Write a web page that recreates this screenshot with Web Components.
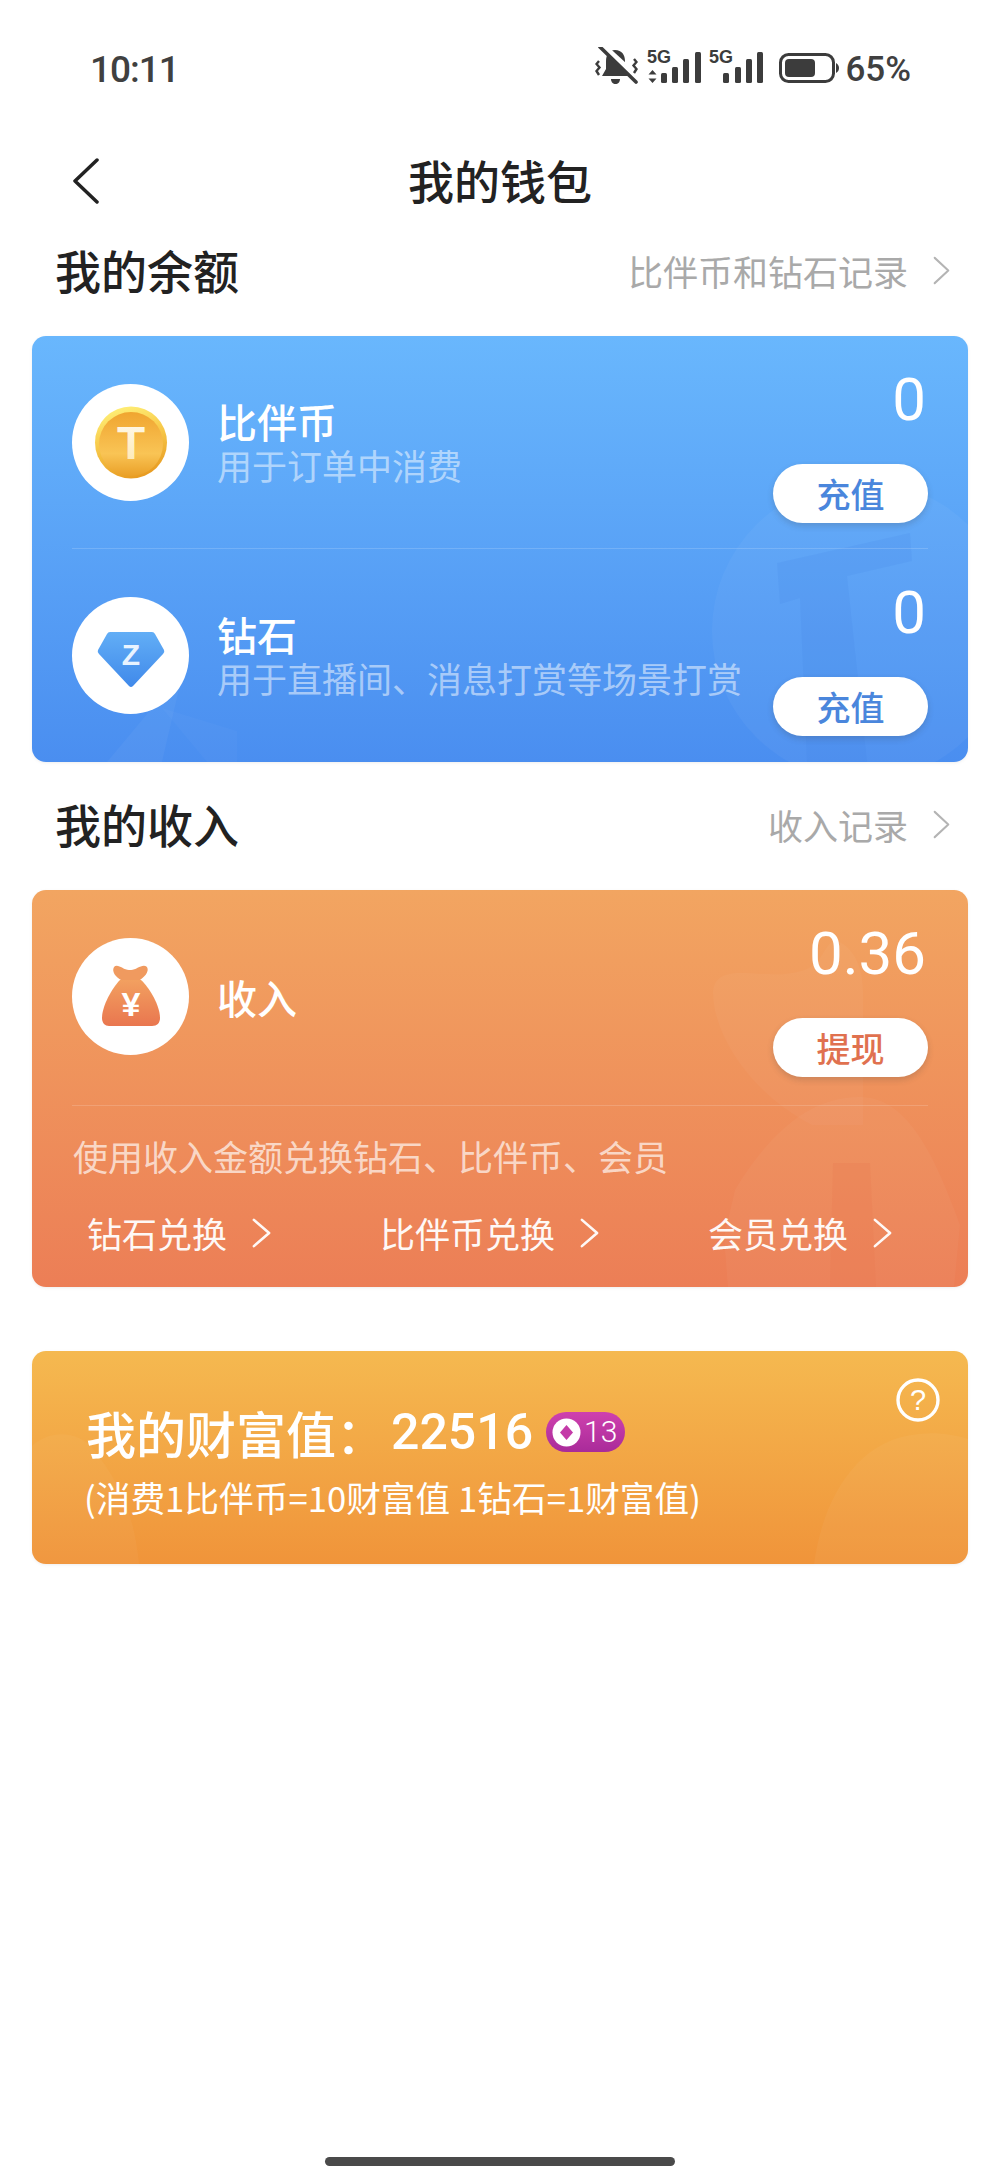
<!DOCTYPE html>
<html lang="zh-CN">
<head>
<meta charset="utf-8">
<title>我的钱包</title>
<style>
  html, body { margin: 0; background: #fff; }
  body { font-family: "Noto Sans CJK SC", "Noto Sans", sans-serif; color: #222; }
  wallet-page { width: 1000px; height: 2177px; }
  wallet-card + section-head { margin-top: 16px; }
</style>
</head>
<body>
<wallet-page>
  <status-bar></status-bar>
  <nav-bar title="我的钱包"></nav-bar>

  <section-head label="我的余额" link="比伴币和钻石记录"></section-head>
  <wallet-card tone="blue">
    <wallet-row value="0" action="充值" icon="coin" name="比伴币" desc="用于订单中消费"></wallet-row>
    <wallet-row value="0" action="充值" icon="diamond" name="钻石" desc="用于直播间、消息打赏等场景打赏" divided></wallet-row>
  </wallet-card>

  <section-head label="我的收入" link="收入记录"></section-head>
  <wallet-card tone="orange">
    <wallet-row value="0.36" action="提现" icon="bag" name="收入" center></wallet-row>
    <exchange-panel note="使用收入金额兑换钻石、比伴币、会员">
      <exchange-link>钻石兑换</exchange-link>
      <exchange-link>比伴币兑换</exchange-link>
      <exchange-link>会员兑换</exchange-link>
    </exchange-panel>
  </wallet-card>

  <wealth-card value="22516" level="13" note="(消费1比伴币=10财富值 1钻石=1财富值)"></wealth-card>
  <home-bar></home-bar>
</wallet-page>

<script>
const CHEVRON = (color, width) => /*html*/ `
  <svg viewBox="0 0 20 32" width="100%" height="100%" preserveAspectRatio="none" style="display:block" fill="none" stroke="${ color }" stroke-width="${ width }" stroke-linecap="round" stroke-linejoin="round">
    <path d="M2 2 L18 16 L2 30"/>
  </svg>`;

class WalletPage extends HTMLElement {
  constructor() {
    super();
    this.attachShadow({ mode: 'open' });
    this.shadowRoot.innerHTML = /*html*/ `
      <style>
        :host { display: flex; flex-direction: column; position: relative; overflow: hidden; }
      </style>
      <slot></slot>
    `;
  }
}

class StatusBar extends HTMLElement {
  constructor() {
    super();
    this.attachShadow({ mode: 'open' });
    this.shadowRoot.innerHTML = /*html*/ `
      <style>
        :host { display: flex; align-items: center; justify-content: space-between; height: 138px; padding: 0 89px 0 90px; box-sizing: border-box; color: #404040; font-family: Roboto, sans-serif; font-weight: 500; }
        .status__time { font-size: 37px; letter-spacing: -1px; }
        .status__icons { display: flex; align-items: center; }
        .status__pct { font-size: 35px; margin-left: 6px; }
        svg { display: block; margin-bottom: 6px; }
        text { font-family: "Liberation Sans", sans-serif; font-weight: 700; font-size: 18px; fill: #3c3c3c; }
      </style>
      <span class="status__time">10:11</span>
      <div class="status__icons">
        <svg width="43" height="38" viewBox="0 0 43 38" style="margin-right:9px">
          <path d="M20 3c-6 0-9 5-9 11v8l-4 7h27l-4-7v-8c0-6-3-11-10-11z" fill="#3c3c3c"/>
          <path d="M16 32h9c0 3-2 5-4.500 5S16 35 16 32z" fill="#3c3c3c"/>
          <path d="M8 -1 L44 32" stroke="#fff" stroke-width="6"/>
          <path d="M5 0 L41 35" stroke="#3c3c3c" stroke-width="3.600" stroke-linecap="round"/>
          <path d="M4 14 L1.500 17 L4.500 20.500 L1.500 24 L4 28 M39 12 L41.500 15 L38.500 18.500 L41.500 22 L39 26" fill="none" stroke="#3c3c3c" stroke-width="2.400"/>
        </svg>
        <svg width="54" height="36" viewBox="0 0 54 36" style="margin-right:8px">
          <text x="0" y="14.500">5G</text>
          <path d="M5.500 22l4 4.500h-8zM5.500 35l4-4.500h-8z" fill="#3c3c3c"/>
          <rect x="14" y="25" width="6" height="10" rx="1.500" fill="#3c3c3c"/>
          <rect x="25" y="19" width="6" height="16" rx="1.500" fill="#3c3c3c"/>
          <rect x="36" y="11" width="6" height="24" rx="1.500" fill="#3c3c3c"/>
          <rect x="48" y="4" width="6" height="31" rx="1.500" fill="#3c3c3c"/>
        </svg>
        <svg width="54" height="36" viewBox="0 0 54 36" style="margin-right:16px">
          <text x="0" y="14.500">5G</text>
          <rect x="14" y="25" width="6" height="10" rx="1.500" fill="#3c3c3c"/>
          <rect x="26" y="19" width="6" height="16" rx="1.500" fill="#3c3c3c"/>
          <rect x="37" y="11" width="6" height="24" rx="1.500" fill="#3c3c3c"/>
          <rect x="48" y="4" width="6" height="31" rx="1.500" fill="#3c3c3c"/>
        </svg>
        <svg width="60" height="30" viewBox="0 0 60 30" style="margin-bottom:2px">
          <rect x="1.500" y="1.500" width="53" height="27" rx="8" fill="none" stroke="#3c3c3c" stroke-width="3"/>
          <rect x="6" y="6" width="30" height="18" rx="4" fill="#3c3c3c"/>
          <path d="M57 10c2 1 3 3 3 5s-1 4-3 5z" fill="#3c3c3c"/>
        </svg>
        <span class="status__pct">65%</span>
      </div>
    `;
  }
}

class NavBar extends HTMLElement {
  constructor() {
    super();
    this.attachShadow({ mode: 'open' });
  }

  connectedCallback() {
    this.shadowRoot.innerHTML = /*html*/ `
      <style>
        :host { display: grid; grid-template-columns: 1fr auto 1fr; align-items: center; height: 86px; }
        .nav__back { width: 26px; height: 46px; margin-left: 73px; }
        .nav__back svg { display: block; }
        .nav__title { font-size: 46px; font-weight: 500; line-height: 1; color: #222; margin-bottom: 5px; }
      </style>
      <div class="nav__back">
        <svg width="26" height="46" viewBox="0 0 26 46" fill="none" stroke="#222" stroke-width="3.500" stroke-linecap="round" stroke-linejoin="round"><path d="M24 2 L2 23 L24 44"/></svg>
      </div>
      <div class="nav__title">${ this.getAttribute('title') }</div>
      <div></div>
    `;
  }
}

class SectionHead extends HTMLElement {
  constructor() {
    super();
    this.attachShadow({ mode: 'open' });
  }

  connectedCallback() {
    this.shadowRoot.innerHTML = /*html*/ `
      <style>
        :host { display: flex; align-items: center; justify-content: space-between; height: 94px; padding: 0 50px 0 55px; }
        .head__label { font-size: 46px; font-weight: 500; line-height: 1; color: #222; margin-bottom: 4px; }
        .head__link { display: flex; align-items: center; font-size: 35px; line-height: 1; color: #a9a9a9; margin-bottom: 2px; }
        .head__chevron { width: 17px; height: 29px; margin-left: 25px; }
      </style>
      <div class="head__label">${ this.getAttribute('label') }</div>
      <div class="head__link">
        ${ this.getAttribute('link') }
        <span class="head__chevron">${ CHEVRON('#b4b4b4', 2.400) }</span>
      </div>
    `;
  }
}

class WalletCard extends HTMLElement {
  constructor() {
    super();
    this.attachShadow({ mode: 'open' });
  }

  watermark(tone) {
    if (tone === 'blue') {
      return /*html*/ `
        <svg class="card__mark" viewBox="0 0 936 426" fill="#fff">
          <circle cx="830" cy="295" r="150" opacity=".04"/>
          <path d="M745 227 L878 197 L880 225 L815 240 L835 426 L775 426 L768 262 L748 268z" fill="#3f82e0" opacity=".14"/>
          <path d="M75 426 L120 372 L150 340 L130 426z" opacity=".04"/>
          <path d="M130 372 L175 426 L205 426 L205 395z" opacity=".025"/>
        </svg>`;
    }
    return /*html*/ `
      <svg class="card__mark" viewBox="0 0 936 397" fill="#fff">
        <path d="M681 103c0-14 10-20 26-20 24 0 42 4 62-2 22-5 24-30 34-30 8 0 28 14 28 50v134h-51c-60-30-99-90-99-132z" opacity=".03"/>
        <path d="M703 300c30-50 70-93 125-93 48 0 75 60 100 128l-6 62H696l-4-50z" opacity=".035"/>
        <path d="M801 273h37l6 124h-46z" fill="#e9764f" opacity=".22"/>
      </svg>`;
  }

  connectedCallback() {
    const tone = this.getAttribute('tone');
    const colors = {
      blue: 'linear-gradient(180deg, #69b7fd 0%, #4a8ef0 100%)',
      orange: 'linear-gradient(180deg, #f2a561 0%, #ec7e56 100%)'
    };
    this.shadowRoot.innerHTML = /*html*/ `
      <style>
        :host { display: block; position: relative; overflow: hidden; margin: 18px 32px 0; border-radius: 14px; background: ${ colors[tone] }; color: #fff; box-shadow: 0 1px 3px rgba(120,120,120,.12); }
        .card__mark { position: absolute; left: 0; top: 0; width: 100%; height: 100%; pointer-events: none; }
        .card__body { position: relative; padding: 0 40px; }
      </style>
      ${ this.watermark(tone) }
      <div class="card__body"><slot></slot></div>
    `;
  }
}

class WalletRow extends HTMLElement {
  constructor() {
    super();
    this.attachShadow({ mode: 'open' });
  }

  icon(name) {
    if (name === 'coin') {
      return /*html*/ `
        <svg viewBox="0 0 117 117" width="117" height="117">
          <defs>
            <linearGradient id="rim" x1="0.2" y1="0" x2="0.5" y2="1"><stop offset="0" stop-color="#fff27a"/><stop offset=".45" stop-color="#f8cb4c"/><stop offset="1" stop-color="#e89c22"/></linearGradient>
            <linearGradient id="face" x1="0" y1="0" x2="0" y2="1"><stop offset="0" stop-color="#f0a530"/><stop offset=".65" stop-color="#f9c455"/><stop offset="1" stop-color="#eaa028"/></linearGradient>
            <linearGradient id="mark" x1="0" y1="0" x2="0" y2="1"><stop offset="0" stop-color="#fffaf0"/><stop offset="1" stop-color="#fde7ae"/></linearGradient>
          </defs>
          <circle cx="58.500" cy="58.500" r="58.500" fill="#fff"/>
          <circle cx="59" cy="58.500" r="36" fill="url(#rim)"/>
          <circle cx="59" cy="60" r="32" fill="url(#face)"/>
          <text x="59" y="75" text-anchor="middle" font-family="Liberation Sans, sans-serif" font-weight="700" font-size="46" fill="url(#mark)">T</text>
        </svg>`;
    }
    if (name === 'diamond') {
      return /*html*/ `
        <svg viewBox="0 0 117 117" width="117" height="117">
          <defs><linearGradient id="gem" x1="0" y1="0" x2="0" y2="1"><stop offset="0" stop-color="#62aef6"/><stop offset="1" stop-color="#4089ea"/></linearGradient></defs>
          <circle cx="58.500" cy="58.500" r="58.500" fill="#fff"/>
          <path d="M38 35 H80 Q82 35 83 37 L92 53 Q93 55 91 57 L61 89 Q59 91 57 89 L27 57 Q25 55 26 53 L35 37 Q36 35 38 35z" fill="url(#gem)"/>
          <text x="59" y="68" text-anchor="middle" font-family="Liberation Sans, sans-serif" font-weight="700" font-size="30" fill="#e8f3ff">Z</text>
        </svg>`;
    }
    return /*html*/ `
      <svg viewBox="0 0 117 117" width="117" height="117">
        <defs><linearGradient id="sack" x1="0" y1="0" x2="0" y2="1"><stop offset="0" stop-color="#f2a060"/><stop offset="1" stop-color="#e9764f"/></linearGradient></defs>
        <circle cx="58.500" cy="58.500" r="58.500" fill="#fff"/>
        <path d="M42 29 C46 25 52 33 58 32 C64 33 70 25 75 29 C78 34 71 40 68 42 H49 C45 40 39 34 42 29z" fill="#f09a5f"/>
        <path d="M48 42 H69 C78 50 88 68 88 80 C88 85 85 88 80 88 H37 C33 88 30 85 30 80 C30 68 40 50 48 42z" fill="url(#sack)"/>
        <text x="59" y="78" text-anchor="middle" font-family="Liberation Sans, sans-serif" font-weight="700" font-size="34" fill="#fff">¥</text>
      </svg>`;
  }

  connectedCallback() {
    const desc = this.getAttribute('desc');
    const isCenter = this.hasAttribute('center');
    this.shadowRoot.innerHTML = /*html*/ `
      <style>
        :host { display: flex; align-items: flex-start; justify-content: space-between; height: 212px; padding-top: 34px; box-sizing: border-box; }
        :host([center]) { height: 215px; }
        :host([divided]) { height: 214px; border-top: 1px solid rgba(255,255,255,.16); }
        .row__main { display: flex; align-items: ${ isCenter ? 'center' : 'flex-start' }; margin-top: 14px; }
        .row__icon { width: 117px; height: 117px; flex: none; }
        .row__icon svg { display: block; }
        .row__text { margin-left: 28px; ${ isCenter ? '' : 'margin-top: 15px;' } white-space: nowrap; }
        .row__name { font-size: 40px; font-weight: 500; line-height: 44px; }
        .row__desc { font-size: 35px; line-height: 44px; color: rgba(255,255,255,.52); }
        .row__side { display: flex; flex-direction: column; align-items: flex-end; }
        .row__value { font-family: Roboto, sans-serif; font-size: 60px; font-weight: 400; line-height: 60px; margin-right: 2px; }
        .row__btn { display: flex; align-items: center; justify-content: center; width: 155px; height: 59px; margin-top: 34px; border-radius: 30px; background: #fff; font-size: 34px; font-weight: 500; color: ${ isCenter ? '#e0714f' : '#4a86dc' }; box-shadow: 0 3px 6px rgba(60,60,60,.2); }
      </style>
      <div class="row__main">
        <div class="row__icon">${ this.icon(this.getAttribute('icon')) }</div>
        <div class="row__text">
          <div class="row__name">${ this.getAttribute('name') }</div>
          ${ desc ? `<div class="row__desc">${ desc }</div>` : '' }
        </div>
      </div>
      <div class="row__side">
        <div class="row__value">${ this.getAttribute('value') }</div>
        <div class="row__btn">${ this.getAttribute('action') }</div>
      </div>
    `;
  }
}

class ExchangePanel extends HTMLElement {
  constructor() {
    super();
    this.attachShadow({ mode: 'open' });
  }

  connectedCallback() {
    this.shadowRoot.innerHTML = /*html*/ `
      <style>
        :host { display: block; height: 182px; box-sizing: border-box; border-top: 1px solid rgba(255,255,255,.16); padding-top: 28px; }
        .panel__note { font-size: 35px; line-height: 44px; color: rgba(255,255,255,.68); margin-left: 1px; }
        .panel__links { display: flex; justify-content: space-between; margin-top: 33px; padding: 0 36px 0 15px; }
      </style>
      <div class="panel__note">${ this.getAttribute('note') }</div>
      <div class="panel__links"><slot></slot></div>
    `;
  }
}

class ExchangeLink extends HTMLElement {
  constructor() {
    super();
    this.attachShadow({ mode: 'open' });
    this.shadowRoot.innerHTML = /*html*/ `
      <style>
        :host { display: flex; align-items: center; font-size: 35px; line-height: 44px; color: #fff; opacity: .95; }
        .link__chevron { width: 19px; height: 30px; margin-left: 25px; }
      </style>
      <slot></slot>
      <span class="link__chevron">${ CHEVRON('#fff', 2.800) }</span>
    `;
  }
}

class WealthCard extends HTMLElement {
  constructor() {
    super();
    this.attachShadow({ mode: 'open' });
  }

  connectedCallback() {
    this.shadowRoot.innerHTML = /*html*/ `
      <style>
        :host { display: block; position: relative; overflow: hidden; margin: 64px 32px 0; height: 213px; border-radius: 14px; background: linear-gradient(180deg, #f5b950 0%, #f0943a 100%); color: #fff; box-shadow: 0 1px 3px rgba(120,120,120,.12); }
        .wealth__mark { position: absolute; left: 0; top: 0; width: 100%; height: 100%; }
        .wealth__help { position: absolute; right: 28px; top: 27px; width: 44px; height: 44px; }
        .wealth__body { position: relative; padding: 51px 0 0 54px; }
        .wealth__title { display: flex; align-items: center; font-size: 50px; font-weight: 500; line-height: 60px; white-space: nowrap; }
        .wealth__num { font-family: Roboto, sans-serif; font-size: 50px; font-weight: 500; margin-left: 5px; }
        .wealth__badge { display: flex; align-items: center; gap: 3px; width: 79px; height: 40px; margin-left: 13px; padding-left: 6px; box-sizing: border-box; border-radius: 20px; background: linear-gradient(180deg, #cf41ae 0%, #a92b9a 100%); font-family: Roboto, sans-serif; font-size: 30px; font-weight: 300; }
        .wealth__note { margin-top: 15px; margin-left: -2px; font-size: 34.700px; line-height: 40px; white-space: nowrap; }
      </style>
      <svg class="wealth__mark" viewBox="0 0 936 213" fill="#fff">
        <path d="M0 95c20-18 48-14 62 4 22 28 40 60 45 114H0z" opacity=".035"/>
        <path d="M782 213c8-60 40-125 105-130 20-2 36 1 49 5v125z" opacity=".04"/>
      </svg>
      <div class="wealth__help">
        <svg width="44" height="44" viewBox="0 0 44 44">
          <circle cx="22" cy="22" r="20" fill="none" stroke="#fff" stroke-width="3.400"/>
          <text x="22" y="32" text-anchor="middle" font-family="Liberation Sans, sans-serif" font-size="29" fill="#fff">?</text>
        </svg>
      </div>
      <div class="wealth__body">
        <div class="wealth__title">我的财富值：<span class="wealth__num">${ this.getAttribute('value') }</span>
          <span class="wealth__badge">
            <svg width="29" height="29" viewBox="0 0 29 29" style="flex:none"><circle cx="14.500" cy="14.500" r="14" fill="#fff"/><path d="M14.500 7 L21 14.500 L14.500 22 L8 14.500z" fill="#c43aa8"/></svg>
            ${ this.getAttribute('level') }
          </span>
        </div>
        <div class="wealth__note">${ this.getAttribute('note') }</div>
      </div>
    `;
  }
}

class HomeBar extends HTMLElement {
  constructor() {
    super();
    this.attachShadow({ mode: 'open' });
    this.shadowRoot.innerHTML = /*html*/ `
      <style>
        :host { display: block; width: 350px; height: 9px; margin: auto auto 11px; border-radius: 5px; background: #4a4a4a; }
      </style>
    `;
  }
}

customElements.define('wallet-page', WalletPage);
customElements.define('status-bar', StatusBar);
customElements.define('nav-bar', NavBar);
customElements.define('section-head', SectionHead);
customElements.define('wallet-card', WalletCard);
customElements.define('wallet-row', WalletRow);
customElements.define('exchange-panel', ExchangePanel);
customElements.define('exchange-link', ExchangeLink);
customElements.define('wealth-card', WealthCard);
customElements.define('home-bar', HomeBar);
</script>
</body>
</html>
